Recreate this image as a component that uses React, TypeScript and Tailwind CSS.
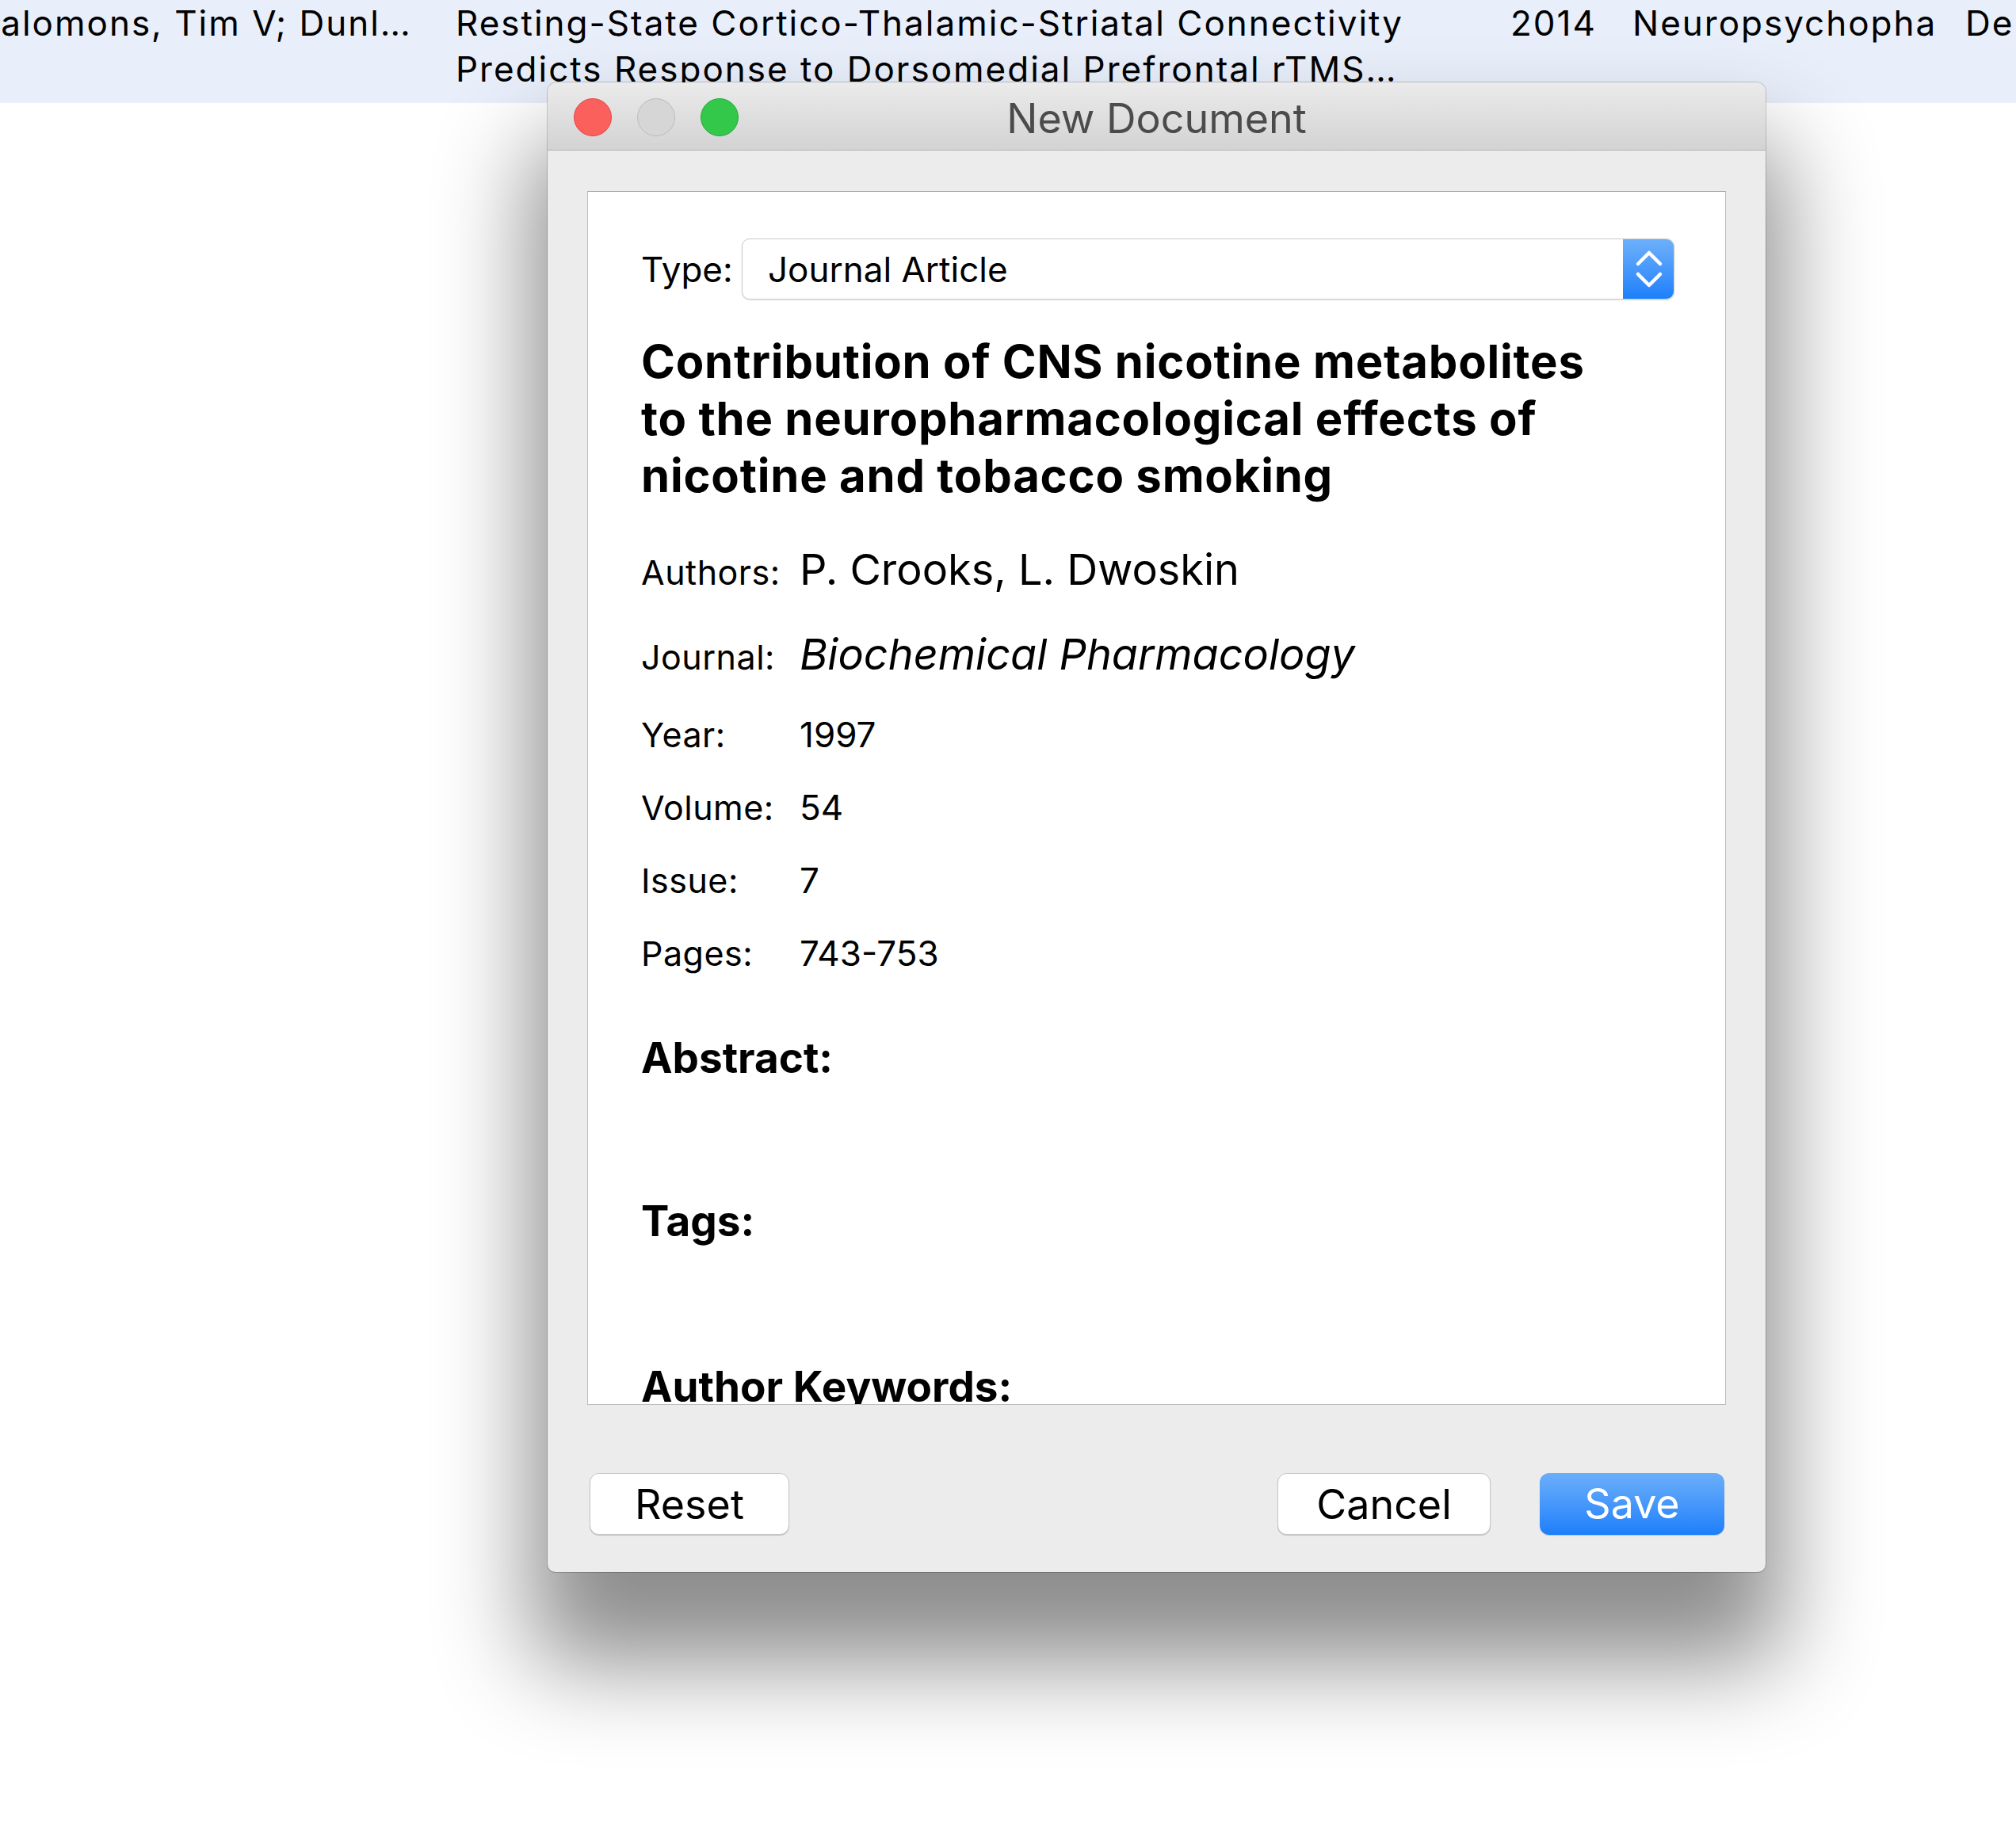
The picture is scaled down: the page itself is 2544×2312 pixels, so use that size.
import React from 'react';

function TrafficLights() {
  return (
    <div className="absolute left-[33px] top-[20px] flex gap-[32px]">
      <span className="w-[48px] h-[48px] rounded-full bg-[#fc605c] border border-[#de4a45]" />
      <span className="w-[48px] h-[48px] rounded-full bg-[#d6d6d6] border border-[#bcbcbc]" />
      <span className="w-[48px] h-[48px] rounded-full bg-[#34c84a] border border-[#27a83b]" />
    </div>
  );
}

function Stepper() {
  return (
    <div className="w-[64px] shrink-0 bg-gradient-to-b from-[#6cb0fb] to-[#1a7ffb] flex items-center justify-center">
      <svg width="64" height="77" viewBox="0 0 64 77" fill="none">
        <path d="M19 32 L33 18 L47 32" stroke="white" strokeWidth="4.5" strokeLinecap="round" strokeLinejoin="round" />
        <path d="M19 45 L33 59 L47 45" stroke="white" strokeWidth="4.5" strokeLinecap="round" strokeLinejoin="round" />
      </svg>
    </div>
  );
}

function FieldRow({ label, value, rowClass, valueClass }: { label: string; value: string; rowClass: string; valueClass: string }) {
  return (
    <div className={`flex items-baseline ${rowClass}`}>
      <span className="w-[200px] shrink-0 text-[43px] tracking-[0.5px]">{label}</span>
      <span className={valueClass}>{value}</span>
    </div>
  );
}

export default function App() {
  return (
    <div className="relative w-[2544px] h-[2312px] bg-white overflow-hidden font-[Inter,sans-serif] text-black">
      {/* list row behind the sheet */}
      <div className="h-[130px] bg-[#e8eefa] flex text-[44px] leading-[58px] tracking-[2px] whitespace-nowrap">
        <div className="w-[604px] ml-[-29px] shrink-0">Salomons, Tim V; Dunl…</div>
        <div className="w-[1331px] shrink-0">
          Resting-State Cortico-Thalamic-Striatal Connectivity
          <br />
          Predicts Response to Dorsomedial Prefrontal rTMS…
        </div>
        <div className="w-[154px] shrink-0">2014</div>
        <div className="w-[420px] shrink-0">Neuropsychopha</div>
        <div className="shrink-0">De</div>
      </div>

      {/* dialog */}
      <div className="absolute left-[691px] top-[104px] w-[1537px] h-[1880px] rounded-t-[12px] rounded-b-[10px] bg-[#ececec] overflow-hidden flex flex-col shadow-[0_95px_120px_20px_rgba(0,0,0,0.45),0_0_0_1px_rgba(0,0,0,0.18)]">
        <div className="relative h-[86px] shrink-0 flex items-center justify-center bg-gradient-to-b from-[#ebebeb] to-[#d3d3d3] border-b border-[#b3b3b3]">
          <TrafficLights />
          <span className="mt-[6px] text-[52px] text-[#4b4b4b]">New Document</span>
        </div>

        <div className="flex-1 flex flex-col px-[50px] pt-[51px]">
          <div className="h-[1532px] shrink-0 bg-white border border-[#bdbdbd] border-t-[#9d9d9d] overflow-hidden pl-[67px] pr-[64px] pt-[59px]">
            <div className="flex items-center">
              <span className="w-[127px] shrink-0 text-[44px]">Type:</span>
              <div className="flex-1 h-[77px] flex rounded-[10px] border border-[#cbcbcb] bg-white overflow-hidden shadow-[0_1px_2px_rgba(0,0,0,0.12)]">
                <div className="flex-1 flex items-center pl-[32px] text-[44px]">Journal Article</div>
                <Stepper />
              </div>
            </div>

            <div className="mt-[42px] text-[58px] leading-[72px] font-bold tracking-[0.8px] whitespace-nowrap">
              Contribution of CNS nicotine metabolites
              <br />
              to the neuropharmacological effects of
              <br />
              nicotine and tobacco smoking
            </div>

            <div className="mt-[31px]">
              <FieldRow label="Authors:" value="P. Crooks, L. Dwoskin" rowClass="leading-[104px]" valueClass="text-[54px]" />
              <FieldRow label="Journal:" value="Biochemical Pharmacology" rowClass="leading-[103px]" valueClass="text-[54px] italic" />
              <FieldRow label="Year:" value="1997" rowClass="leading-[92px]" valueClass="text-[44px]" />
              <FieldRow label="Volume:" value="54" rowClass="leading-[92px]" valueClass="text-[44px]" />
              <FieldRow label="Issue:" value="7" rowClass="leading-[92px]" valueClass="text-[44px]" />
              <FieldRow label="Pages:" value="743-753" rowClass="leading-[92px]" valueClass="text-[44px]" />
            </div>

            <div className="mt-[50px] text-[53px] leading-[72px] font-bold">Abstract:</div>
            <div className="mt-[134px] text-[53px] leading-[72px] font-bold">Tags:</div>
            <div className="mt-[137px] text-[53px] leading-[72px] font-bold">Author Keywords:</div>
          </div>

          <div className="mt-[86px] flex items-center pl-[3px] pr-[2px] text-[52px]">
            <button className="w-[252px] h-[78px] rounded-[12px] bg-white border border-[#c6c6c6] shadow-[0_1px_1px_rgba(0,0,0,0.18)]">Reset</button>
            <div className="flex-1" />
            <button className="w-[269px] h-[78px] rounded-[12px] bg-white border border-[#c6c6c6] shadow-[0_1px_1px_rgba(0,0,0,0.18)]">Cancel</button>
            <button className="ml-[62px] w-[233px] h-[78px] rounded-[12px] bg-gradient-to-b from-[#6aaefa] to-[#1a7ffb] text-white shadow-[0_1px_1px_rgba(0,0,0,0.18)]">Save</button>
          </div>
        </div>
      </div>
    </div>
  );
}
